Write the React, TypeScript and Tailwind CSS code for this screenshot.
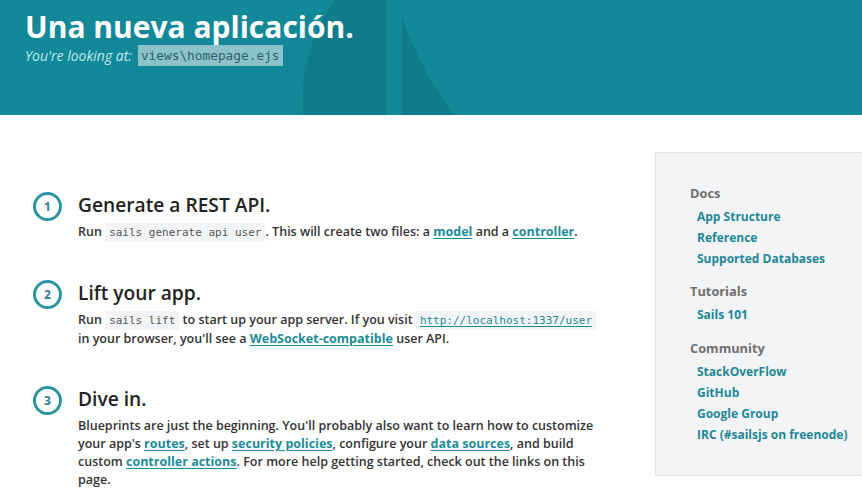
import React from 'react';

const sans = "font-['Open_Sans',_'Noto_Sans',_sans-serif]";
const mono = "font-['DejaVu_Sans_Mono',_'Liberation_Mono',_monospace]";

const A: React.FC<{ children: React.ReactNode }> = ({ children }) => (
    <a href="#" className="text-[#1b8c98] font-bold underline underline-offset-2 decoration-1">
        {children}
    </a>
);

const Code: React.FC<{ children: React.ReactNode }> = ({ children }) => (
    <code className={`${mono} text-[11px] font-normal text-[#555] bg-[#f3f4f5] px-[4px] py-[3px]`}>{children}</code>
);

const Step: React.FC<{ n: number; title: string; children: React.ReactNode }> = ({ n, title, children }) => (
    <div className="flex">
        <div className="w-[45px] shrink-0">
            <div className="w-[29px] h-[29px] rounded-full border-[3px] border-[#2b96a0] flex items-center justify-center text-[12px] font-bold text-[#2d7b85]">
                {n}
            </div>
        </div>
        <div className="w-[530px]">
            <h2 className="text-[19.2px] leading-[26px] font-semibold text-[#222]">{title}</h2>
            <p className="mt-[5px] text-[12.5px] leading-[18px] font-semibold text-[#333]">{children}</p>
        </div>
    </div>
);

const SideGroup: React.FC<{ title: string; links: string[] }> = ({ title, links }) => (
    <div>
        <h3 className="text-[12.8px] leading-[20px] font-bold text-[#6f6f6f]">{title}</h3>
        <ul className="mt-[4px] pl-[7px]">
            {links.map((l) => (
                <li key={l} className="text-[12px] leading-[20.8px] font-bold text-[#1e8797]">
                    {l}
                </li>
            ))}
        </ul>
    </div>
);

export default function App() {
    return (
        <div className={`${sans} w-[862px] h-[490px] overflow-hidden bg-white`}>
            <header className="relative h-[115px] bg-[#138898] overflow-hidden">
                <svg className="absolute left-0 top-0" width="862" height="115" viewBox="0 0 862 115">
                    <path d="M334 0 C 315 30, 300 65, 303 115 L 386 115 L 386 0 Z" fill="#107c8a" />
                    <path d="M402 17 C 415 55, 435 90, 455 115 L 402 115 Z" fill="#107c8a" />
                </svg>
                <div className="relative pl-[25px] pt-[7px]">
                    <h1 className="text-[30px] leading-[40px] font-bold text-white">Una nueva aplicación.</h1>
                    <div className="flex items-center -mt-[2px]">
                        <span className="italic text-[14px] text-[#bde9ef]">You're looking at:</span>
                        <span className={`${mono} ml-[6px] text-[12.8px] leading-[21px] text-[#2d5f66] bg-[#8cc3cb] px-[3px]`}>
                            views\homepage.ejs
                        </span>
                    </div>
                </div>
            </header>
            <div className="flex">
                <main className="pl-[33px] pt-[77px] flex flex-col gap-[38px]">
                    <Step n={1} title="Generate a REST API.">
                        Run <Code>sails generate api user</Code>. This will create two files: a <A>model</A> and a{' '}
                        <A>controller</A>.
                    </Step>
                    <Step n={2} title="Lift your app.">
                        Run <Code>sails lift</Code> to start up your app server. If you visit{' '}
                        <Code>
                            <span className="text-[#1b8c98] underline underline-offset-2">http://localhost:1337/user</span>
                        </Code>{' '}
                        in your browser, you'll see a <A>WebSocket-compatible</A> user API.
                    </Step>
                    <Step n={3} title="Dive in.">
                        Blueprints are just the beginning. You'll probably also want to learn how to customize your app's{' '}
                        <A>routes</A>, set up <A>security policies</A>, configure your <A>data sources</A>, and build
                        custom <A>controller actions</A>. For more help getting started, check out the links on this
                        page.
                    </Step>
                </main>
                <aside className="ml-auto mt-[37px] w-[207px] h-[324px] bg-[#f3f4f6] border border-r-0 border-[#e3e3e3] pl-[34px] pt-[30px] flex flex-col gap-[12px]">
                    <SideGroup title="Docs" links={['App Structure', 'Reference', 'Supported Databases']} />
                    <SideGroup title="Tutorials" links={['Sails 101']} />
                    <SideGroup
                        title="Community"
                        links={['StackOverFlow', 'GitHub', 'Google Group', 'IRC (#sailsjs on freenode)']}
                    />
                </aside>
            </div>
        </div>
    );
}
